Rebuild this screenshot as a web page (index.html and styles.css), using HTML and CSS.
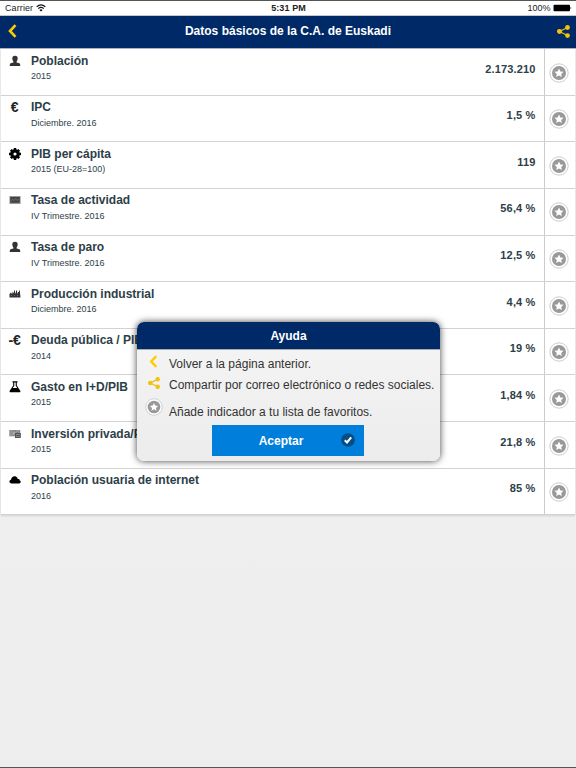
FILE: index.html
```
<!DOCTYPE html>
<html lang="es">
<head>
<meta charset="utf-8">
<title>Datos básicos de la C.A. de Euskadi</title>
<link rel="stylesheet" href="styles.css">
</head>
<body>
<svg class="defs" width="0" height="0">
  <symbol id="user" viewBox="0 0 12 12"><path d="M6 .8C8 .8 8.800 2 8.700 3.600 8.600 5 8.100 5.900 7.600 6.500V7.500L10.500 8.300Q11.300 9 11.300 11H.7Q.7 9 1.500 8.300L4.400 7.500V6.500C3.900 5.900 3.400 5 3.300 3.600 3.200 2 4 .8 6 .8Z"/></symbol>
  <symbol id="gear" viewBox="0 0 12 12"><circle cx="6" cy="6" r="3.200" fill="none" stroke="currentColor" stroke-width="3.200"/><path d="M6 0V2.500M6 9.500V12M0 6H2.500M9.500 6H12M1.800 1.800L3.500 3.500M8.500 8.500L10.200 10.200M10.200 1.800L8.500 3.500M3.500 8.500L1.800 10.200" stroke="currentColor" stroke-width="2.500"/></symbol>
  <symbol id="board" viewBox="0 0 12 12"><path d="M.4 2H11.600V10H.4Z" fill="#999"/><path d="M1.200 3H10.800V8.800H1.200Z" fill="#444"/><path d="M2 7L3.500 5.200 5 6.500 6.500 4.800 8 6.200 9.800 5.600" fill="none" stroke="#888" stroke-width=".6"/></symbol>
  <symbol id="factory" viewBox="0 0 12 12"><path d="M.5 9.500V6L2 4.500V6L3.500 3.500V6L5 4V2.500H6V6L7 4V2.500H8V6L9 4H10V2.500H10.800L11.500 9.500Z" fill="#333"/><path d="M2 7.600H3M5 7.600H6M8 7.600H9" stroke="#aaa" stroke-width=".6"/></symbol>
  <symbol id="flask" viewBox="0 0 12 12"><path d="M3.500 .3H8.500V1.500H7.800V4.500L11.400 10Q11.700 11.300 10.700 11.300H1.300Q.3 11.300 .6 10L4.200 4.500V1.500H3.500Z"/><path d="M5.300 1.500H6.700V4.800L8.200 7H3.800L5.300 4.800Z" fill="#fff"/></symbol>
  <symbol id="money" viewBox="0 0 12 12"><path d="M.3 2H11.200V8.300H.3Z" fill="#888"/><path d="M1.200 3H3.500M1.200 5H3M1.200 7H4.500M7 3H10" stroke="#bbb" stroke-width=".6"/><circle cx="5" cy="5" r="1.500" fill="#aaa"/><path d="M6 5H11.800V10H6Z" fill="#555"/><path d="M7 6.500H10.800M7 8.400H10.800" stroke="#aaa" stroke-width=".6"/></symbol>
  <symbol id="cloud" viewBox="0 0 12 12"><path d="M2.700 9.500C-.4 9.500-.1 6 2 5.700 2.200 3.500 4.700 1.400 7.100 2.700 8.300 3.200 8.700 4.200 8.700 5 10.200 4.600 10.800 5.600 10.500 6.300 12.500 7 11.800 9.500 10.100 9.500Z"/></symbol>
  <symbol id="back" viewBox="0 0 9 14"><path d="M7.500 1.200L2 7 7.500 12.800" fill="none" stroke="#fc0" stroke-width="2.600"/></symbol>
  <symbol id="share" viewBox="0 0 12 12"><path d="M9.700 2.300L2.300 6 9.700 9.700" fill="none" stroke="#e9ba0b" stroke-width="1.200"/><g fill="#f4c20b"><circle cx="9.700" cy="2.300" r="2.200"/><circle cx="2.300" cy="6" r="2.300"/><circle cx="9.700" cy="9.700" r="2.200"/></g></symbol>
  <symbol id="star" viewBox="0 0 20 20"><circle cx="10" cy="10" r="9.200" fill="#fff" stroke="#ccc"/><circle cx="10" cy="10" r="7" fill="#999"/><path d="M10 5.500L11.400 8.400 14.600 8.800 12.200 11 12.800 14.100 10 12.600 7.200 14.100 7.800 11 5.400 8.800 8.600 8.400Z" fill="#fff"/></symbol>
</svg>
<div class="status">
  <span class="carrier">Carrier
    <svg width="10" height="8" viewBox="0 0 10 8"><path d="M.7 2.800Q5-1 9.300 2.800M2.300 4.600Q5 2.300 7.700 4.600" fill="none" stroke="#111" stroke-width="1.200"/><path d="M3.500 5.900Q5 4.700 6.500 5.900L5 7.500Z"/></svg>
  </span>
  <span class="time">5:31 PM</span>
  <span class="battery">100% <svg width="19" height="8" viewBox="0 0 19 8"><rect x=".5" y=".8" width="16.500" height="6.400" rx="1"/><path d="M17.600 2.500Q19 4 17.600 5.500Z"/></svg></span>
</div>
<header class="bar">
  <svg class="bar-back"><use href="#back"/></svg>
  <h1>Datos básicos de la C.A. de Euskadi</h1>
  <svg class="bar-share"><use href="#share"/></svg>
</header>
<ul class="list">
  <li><svg class="icon soft"><use href="#user"/></svg><div class="label"><h2>Población</h2><p>2015</p></div><b>2.173.210</b><span class="fav"><svg><use href="#star"/></svg></span></li>
  <li><span class="icon euro">€</span><div class="label"><h2>IPC</h2><p>Diciembre. 2016</p></div><b>1,5 %</b><span class="fav"><svg><use href="#star"/></svg></span></li>
  <li><svg class="icon"><use href="#gear"/></svg><div class="label"><h2>PIB per cápita</h2><p>2015 (EU-28=100)</p></div><b>119</b><span class="fav"><svg><use href="#star"/></svg></span></li>
  <li><svg class="icon"><use href="#board"/></svg><div class="label"><h2>Tasa de actividad</h2><p>IV Trimestre. 2016</p></div><b>56,4 %</b><span class="fav"><svg><use href="#star"/></svg></span></li>
  <li><svg class="icon soft"><use href="#user"/></svg><div class="label"><h2>Tasa de paro</h2><p>IV Trimestre. 2016</p></div><b>12,5 %</b><span class="fav"><svg><use href="#star"/></svg></span></li>
  <li><svg class="icon"><use href="#factory"/></svg><div class="label"><h2>Producción industrial</h2><p>Diciembre. 2016</p></div><b>4,4 %</b><span class="fav"><svg><use href="#star"/></svg></span></li>
  <li><span class="icon euro">-€</span><div class="label"><h2>Deuda pública / PIB</h2><p>2014</p></div><b>19 %</b><span class="fav"><svg><use href="#star"/></svg></span></li>
  <li><svg class="icon"><use href="#flask"/></svg><div class="label"><h2>Gasto en I+D/PIB</h2><p>2015</p></div><b>1,84 %</b><span class="fav"><svg><use href="#star"/></svg></span></li>
  <li><svg class="icon"><use href="#money"/></svg><div class="label"><h2>Inversión privada/PIB</h2><p>2015</p></div><b>21,8 %</b><span class="fav"><svg><use href="#star"/></svg></span></li>
  <li><svg class="icon"><use href="#cloud"/></svg><div class="label"><h2>Población usuaria de internet</h2><p>2016</p></div><b>85 %</b><span class="fav"><svg><use href="#star"/></svg></span></li>
</ul>
<div class="dialog">
  <h3>Ayuda</h3>
  <div class="help">
    <svg class="h-back"><use href="#back"/></svg><span>Volver a la página anterior.</span>
    <svg class="h-share"><use href="#share"/></svg><span>Compartir por correo electrónico o redes sociales.</span>
    <svg class="h-star"><use href="#star"/></svg><span class="low">Añade indicador a tu lista de favoritos.</span>
  </div>
  <button><span>Aceptar</span><svg width="14" height="14" viewBox="0 0 14 14"><circle cx="7" cy="7" r="6.800" fill="#064c86"/><path d="M3.800 7.200L6 9.500 10.200 4.300" fill="none" stroke="#fff" stroke-width="2"/></svg></button>
</div>
</body>
</html>
```
FILE: styles.css
```
* { box-sizing: border-box; }
body {
  margin: 0;
  height: 768px;
  overflow: hidden;
  position: relative;
  font-family: "Liberation Sans", Arial, sans-serif;
  background: linear-gradient(#f3f3f3, #ededed);
  border-bottom: 1px solid #555;
}
h1, h2, h3, p, ul { margin: 0; padding: 0; }
.defs { position: absolute; }
.status {
  height: 15px;
  border-top: 1px solid #555;
  background: #fff;
  display: grid;
  grid-template-columns: 1fr auto 1fr;
  align-items: center;
  padding: 0 4px 0 5px;
  font-size: 9px;
  line-height: 14px;
  color: #222;
}
.status svg { vertical-align: -1px; }
.carrier { letter-spacing: .1px; }
.time { font-weight: bold; letter-spacing: .1px; }
.battery { text-align: right; }
.bar {
  height: 34px;
  background: #002a67;
  border-top: 1px solid #c2c6ce;
  border-bottom: 1px solid #aeb3bc;
  display: flex;
  align-items: center;
  justify-content: space-between;
  padding: 0 6px 2px 8px;
}
.bar h1 { font-size: 12px; line-height: 16px; color: #fff; margin-left: 2px; }
.bar-back { width: 9px; height: 14px; }
.bar-share { width: 13px; height: 13px; }
.list {
  list-style: none;
  margin: 0 1px;
  background: #fff;
  box-shadow: 0 1px 2px rgba(0, 0, 0, .12);
}
.list li {
  height: 46.63px;
  display: flex;
  border-bottom: 1px solid #d2d2d2;
  color: #2d3e48;
}
.icon { width: 12px; height: 12px; margin: 5.500px 11px 0 7.500px; flex: none; color: #000; }
.soft { fill: #333; }
.euro { font-size: 14px; line-height: 13px; font-weight: bold; letter-spacing: -.3px; white-space: nowrap; display: flex; justify-content: center; color: #222; }
.label { flex: 1; padding-top: 3.500px; margin-left: -.5px; }
.label h2 { font-size: 12px; line-height: 16px; }
.label p { font-size: 9px; line-height: 14px; margin-top: .5px; }
.list b { font-size: 11px; line-height: 16px; margin: 11.500px 8.500px 0 0; letter-spacing: .15px; }
.fav { width: 31px; border-left: 1px solid #ccc; padding: 13.500px 0 0 4px; }
.fav svg { width: 20px; height: 20px; display: block; }
.dialog {
  position: absolute;
  left: 137px;
  top: 322px;
  width: 303px;
  height: 139px;
  border-radius: 7px;
  background: linear-gradient(#f5f5f5, #ececec);
  box-shadow: 0 0 7px rgba(0, 0, 0, .75);
  overflow: hidden;
}
.dialog h3 {
  height: 28px;
  background: #002a67;
  border-bottom: 1px solid #aaa;
  color: #fff;
  font-size: 12px;
  line-height: 28px;
  text-align: center;
}
.help {
  display: grid;
  grid-template-columns: 32px 1fr;
  grid-template-rows: 24px 17px 34px;
  font-size: 12px;
  line-height: 16px;
  color: #333;
  white-space: nowrap;
}
.help span { padding-top: 6px; }
.help .h-back { width: 9px; height: 13px; margin: 5px 0 0 12px; }
.help span:nth-of-type(2) { padding-top: 3px; }
.help .h-share { width: 12px; height: 12px; margin: 3px 0 0 11px; }
.help .h-star { width: 18px; height: 18px; margin: 7px 0 0 8px; }
.help .low { padding-top: 13px; }
.dialog button {
  width: 152px;
  height: 31px;
  margin-left: 75px;
  border: 0;
  padding: 0;
  background: #007edb;
  color: #fff;
  font: bold 12px "Liberation Sans", Arial, sans-serif;
  display: grid;
  grid-template-columns: 138px 14px;
  align-items: center;
}
.dialog button svg { margin: -2px 0 0 -9px; }
```
